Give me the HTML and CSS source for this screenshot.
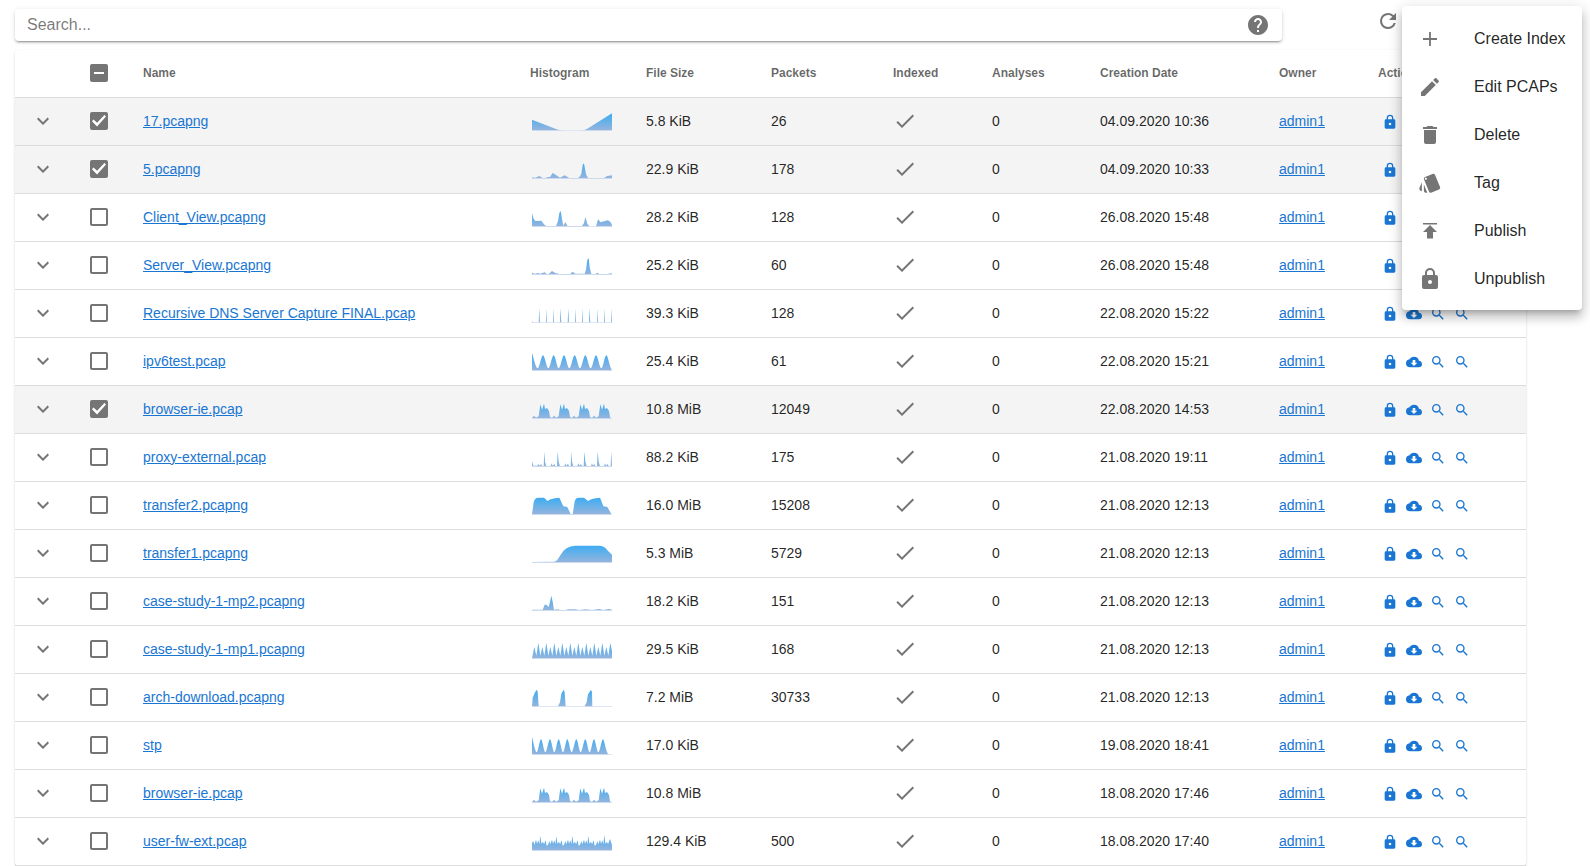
FILE: index.html
```
<!DOCTYPE html>
<html lang="en">
<head>
<meta charset="utf-8">
<meta name="viewport" content="width=device-width, initial-scale=1">
<title>PCAPs</title>
<link rel="stylesheet" href="styles.css">
</head>
<body>
<svg class="defs" aria-hidden="true">
  <defs>
    <linearGradient id="fill" gradientUnits="userSpaceOnUse" x1="0" y1="0" x2="0" y2="54"><stop offset="0" stop-color="#3aacf3"/><stop offset="1" stop-color="#98b5dc"/></linearGradient>
    <symbol id="chevron" viewBox="0 0 24 24"><path d="M7.41 8.58 12 13.17l4.59-4.59L18 10l-6 6-6-6z"/></symbol>
    <symbol id="check" viewBox="0 0 24 24"><path d="M9 16.17 4.83 12l-1.42 1.41L9 19 21 7l-1.41-1.41z"/></symbol>
    <symbol id="lock" viewBox="0 0 24 24"><path d="M12 17a2 2 0 0 0 2-2 2 2 0 0 0-2-2 2 2 0 0 0-2 2 2 2 0 0 0 2 2m6-9a2 2 0 0 1 2 2v10a2 2 0 0 1-2 2H6a2 2 0 0 1-2-2V10a2 2 0 0 1 2-2h1V6a5 5 0 0 1 10 0v2h1m-6-5a3 3 0 0 0-3 3v2h6V6a3 3 0 0 0-3-3z"/></symbol>
    <symbol id="cloud" viewBox="0 0 24 24"><path d="M17 13l-5 5-5-5h3V9h4v4m5.35-2.97A7.49 7.49 0 0 0 12 4C9.11 4 6.6 5.64 5.35 8.04A5.994 5.994 0 0 0 0 14a6 6 0 0 0 6 6h13a5 5 0 0 0 5-5c0-2.64-2.05-4.78-4.65-4.97z"/></symbol>
    <symbol id="search" viewBox="0 0 24 24"><path d="M9.5 3A6.5 6.5 0 0 1 16 9.500c0 1.610-.59 3.090-1.560 4.230l.27.270h.79l5 5-1.500 1.500-5-5v-.79l-.27-.27A6.516 6.516 0 0 1 9.500 16a6.500 6.500 0 0 1 0-13m0 2C7 5 5 7 5 9.500S7 14 9.500 14 14 12 14 9.500 12 5 9.500 5z"/></symbol>
    <symbol id="help" viewBox="0 0 24 24"><path d="M12 2C6.480 2 2 6.480 2 12s4.480 10 10 10 10-4.480 10-10S17.520 2 12 2zm1 17h-2v-2h2v2zm2.070-7.750-.9.920C13.450 12.900 13 13.500 13 15h-2v-.5c0-1.100.45-2.100 1.170-2.830l1.240-1.260c.37-.36.59-.86.59-1.410 0-1.100-.9-2-2-2s-2 .9-2 2H8c0-2.210 1.790-4 4-4s4 1.790 4 4c0 .88-.36 1.680-.93 2.250z"/></symbol>
    <symbol id="refresh" viewBox="0 0 24 24"><path d="M17.650 6.350A7.960 7.960 0 0 0 12 4a8 8 0 1 0 7.730 10h-2.080A6 6 0 1 1 12 6c1.660 0 3.140.69 4.220 1.780L13 11h7V4z"/></symbol>
    <symbol id="plus" viewBox="0 0 24 24"><path d="M19 12.900h-6.100V19h-1.800v-6.100H5v-1.800h6.100V5h1.800v6.100H19z"/></symbol>
    <symbol id="pencil" viewBox="0 0 24 24"><path d="M20.710 7.040c.39-.39.39-1.040 0-1.410l-2.340-2.340c-.37-.39-1.020-.39-1.410 0l-1.840 1.830 3.750 3.750M3 17.250V21h3.750L17.810 9.930l-3.750-3.750z"/></symbol>
    <symbol id="trash" viewBox="0 0 24 24"><path d="M19 4h-3.500l-1-1h-5l-1 1H5v2h14M6 19a2 2 0 0 0 2 2h8a2 2 0 0 0 2-2V7H6z"/></symbol>
    <symbol id="cards" viewBox="0 0 24 24"><path d="M2.530 19.650l1.340.56v-9.030l-2.430 5.860c-.41 1.020.08 2.190 1.090 2.610m19.500-3.700L17.070 3.980a2.013 2.013 0 0 0-1.810-1.230c-.26 0-.53.04-.79.15L7.100 5.950a1.999 1.999 0 0 0-1.080 2.600l4.960 11.970a1.998 1.998 0 0 0 2.600 1.080l7.360-3.050a1.994 1.994 0 0 0 1.090-2.600M7.880 8.750c-.55 0-1-.45-1-1s.45-1 1-1 1 .45 1 1-.45 1-1 1m-2 11a2 2 0 0 0 2 2h1.450l-3.450-8.340z"/></symbol>
    <symbol id="publish" viewBox="0 0 24 24"><path d="M5 4v1.500h14V4H5zm0 9h4v6.500h6V13h4l-7-7z"/></symbol>
    <g id="bursts"><path d="M0 51 6 44 12 50 20 46 25 10 30 26 36 8 39 24 45 21 51 30 54 48 60 51 66 44 72 50 80 46 85 10 90 26 96 8 99 24 105 21 111 30 114 48 120 51 126 44 132 50 140 46 145 10 150 26 156 8 159 24 165 21 171 30 174 48 180 51 186 44 192 50 200 46 205 10 210 26 216 8 219 24 225 21 231 30 234 48 237 52H0z"/></g>
  </defs>
</svg>

<main class="page">
  <header class="toolbar">
    <div class="search">
      <input class="search-input" type="text" placeholder="Search..." aria-label="Search">
      <button class="icon-button" type="button" aria-label="Help"><svg class="icon"><use href="#help"/></svg></button>
    </div>
    <button class="icon-button" type="button" aria-label="Refresh"><svg class="icon"><use href="#refresh"/></svg></button>
  </header>

  <table class="pcaps">
    <colgroup><col class="c-expand"><col class="c-select"><col><col class="c-chart"><col class="c-size"><col class="c-packets"><col class="c-indexed"><col class="c-analyses"><col class="c-date"><col class="c-owner"><col class="c-actions"></colgroup>
    <thead>
      <tr><th></th><th><input class="box mixed" type="checkbox" aria-label="Select all"></th><th>Name</th><th>Histogram</th><th>File Size</th><th>Packets</th><th>Indexed</th><th>Analyses</th><th>Creation Date</th><th>Owner</th><th>Actions</th></tr>
    </thead>
    <tbody>
      <tr class="selected">
        <td><button class="icon-button expand" type="button" aria-label="Expand"><svg class="icon"><use href="#chevron"/></svg></button></td>
        <td><input class="box" type="checkbox" checked aria-label="Select 17.pcapng"></td>
        <td><a href="#">17.pcapng</a></td>
        <td><svg class="chart" viewBox="0 0 240 54"><path class="base" d="M0 51h240v3H0z"/><path d="M0 52V20L74 49Q82 52 92 52H148Q158 52 166 47L240 1V52z"/></svg></td>
        <td>5.8 KiB</td><td>26</td><td><svg class="icon"><use href="#check"/></svg></td><td>0</td><td>04.09.2020 10:36</td><td><a href="#">admin1</a></td>
        <td><div class="actions"><button type="button" aria-label="Lock"><svg><use href="#lock"/></svg></button><button type="button" aria-label="Download"><svg><use href="#cloud"/></svg></button><button type="button" aria-label="Inspect"><svg><use href="#search"/></svg></button><button type="button" aria-label="Analyze"><svg><use href="#search"/></svg></button></div></td>
      </tr>
      <tr class="selected">
        <td><button class="icon-button expand" type="button" aria-label="Expand"><svg class="icon"><use href="#chevron"/></svg></button></td>
        <td><input class="box" type="checkbox" checked aria-label="Select 5.pcapng"></td>
        <td><a href="#">5.pcapng</a></td>
        <td><svg class="chart" viewBox="0 0 240 54"><path class="base" d="M0 51h240v3H0z"/><path d="M0 52V49L10 50 22 45 32 51H40L48 48H54L62 36 72 42 84 50 98 43 112 51H138L144 46 148 38 152 12 154 7 157 12 162 40 168 51H216L226 45 240 43V52z"/></svg></td>
        <td>22.9 KiB</td><td>178</td><td><svg class="icon"><use href="#check"/></svg></td><td>0</td><td>04.09.2020 10:33</td><td><a href="#">admin1</a></td>
        <td><div class="actions"><button type="button" aria-label="Lock"><svg><use href="#lock"/></svg></button><button type="button" aria-label="Download"><svg><use href="#cloud"/></svg></button><button type="button" aria-label="Inspect"><svg><use href="#search"/></svg></button><button type="button" aria-label="Analyze"><svg><use href="#search"/></svg></button></div></td>
      </tr>
      <tr>
        <td><button class="icon-button expand" type="button" aria-label="Expand"><svg class="icon"><use href="#chevron"/></svg></button></td>
        <td><input class="box" type="checkbox" aria-label="Select Client_View.pcapng"></td>
        <td><a href="#">Client_View.pcapng</a></td>
        <td><svg class="chart" viewBox="0 0 240 54"><path class="base" d="M0 51h240v3H0z"/><path d="M0 52V12L4 28 10 36 28 35 36 46 42 51H72L78 36 82 12 86 6 90 30 94 50 100 39 106 51H150L156 42 160 24 166 44 172 52H192L198 31 206 40 216 37 228 34 236 40 240 48V52z"/></svg></td>
        <td>28.2 KiB</td><td>128</td><td><svg class="icon"><use href="#check"/></svg></td><td>0</td><td>26.08.2020 15:48</td><td><a href="#">admin1</a></td>
        <td><div class="actions"><button type="button" aria-label="Lock"><svg><use href="#lock"/></svg></button><button type="button" aria-label="Download"><svg><use href="#cloud"/></svg></button><button type="button" aria-label="Inspect"><svg><use href="#search"/></svg></button><button type="button" aria-label="Analyze"><svg><use href="#search"/></svg></button></div></td>
      </tr>
      <tr>
        <td><button class="icon-button expand" type="button" aria-label="Expand"><svg class="icon"><use href="#chevron"/></svg></button></td>
        <td><input class="box" type="checkbox" aria-label="Select Server_View.pcapng"></td>
        <td><a href="#">Server_View.pcapng</a></td>
        <td><svg class="chart" viewBox="0 0 240 54"><path class="base" d="M0 51h240v3H0z"/><path d="M0 52V47L8 50 18 48 24 50 38 46 44 51H50L60 42 70 48 82 51H114L122 44 130 50H158L162 38 166 8 170 4 173 30 178 51H190L196 47 202 51H224L240 49V52z"/></svg></td>
        <td>25.2 KiB</td><td>60</td><td><svg class="icon"><use href="#check"/></svg></td><td>0</td><td>26.08.2020 15:48</td><td><a href="#">admin1</a></td>
        <td><div class="actions"><button type="button" aria-label="Lock"><svg><use href="#lock"/></svg></button><button type="button" aria-label="Download"><svg><use href="#cloud"/></svg></button><button type="button" aria-label="Inspect"><svg><use href="#search"/></svg></button><button type="button" aria-label="Analyze"><svg><use href="#search"/></svg></button></div></td>
      </tr>
      <tr>
        <td><button class="icon-button expand" type="button" aria-label="Expand"><svg class="icon"><use href="#chevron"/></svg></button></td>
        <td><input class="box" type="checkbox" aria-label="Select Recursive DNS Server Capture FINAL.pcap"></td>
        <td><a href="#">Recursive DNS Server Capture FINAL.pcap</a></td>
        <td><svg class="chart" viewBox="0 0 240 54"><path class="base" d="M0 51h240v3H0z"/><path d="M0 52V48L3 52H20L22 10 24 52H42L43 10 45 52H63L64 10 66 52H84L85 10 88 52H107L109 10 111 52H129L130 10 132 52H150L151 10 153 52H171L172 10 175 52H195L196 10 198 52H216L217 10 219 52H237L239 10 240 52z"/></svg></td>
        <td>39.3 KiB</td><td>128</td><td><svg class="icon"><use href="#check"/></svg></td><td>0</td><td>22.08.2020 15:22</td><td><a href="#">admin1</a></td>
        <td><div class="actions"><button type="button" aria-label="Lock"><svg><use href="#lock"/></svg></button><button type="button" aria-label="Download"><svg><use href="#cloud"/></svg></button><button type="button" aria-label="Inspect"><svg><use href="#search"/></svg></button><button type="button" aria-label="Analyze"><svg><use href="#search"/></svg></button></div></td>
      </tr>
      <tr>
        <td><button class="icon-button expand" type="button" aria-label="Expand"><svg class="icon"><use href="#chevron"/></svg></button></td>
        <td><input class="box" type="checkbox" aria-label="Select ipv6test.pcap"></td>
        <td><a href="#">ipv6test.pcap</a></td>
        <td><svg class="chart" viewBox="0 0 240 54"><path class="base" d="M0 51h240v3H0z"/><path d="M0 52V0C6 20 12 46 17 46S28 7 33 7 44 46 49 46 60 7 65 7 75 46 80 46 91 7 96 7 107 46 112 46 123 7 128 7 139 46 144 46 155 7 160 7 171 46 176 46 187 7 192 7 203 46 208 46 218 7 223 7 234 46 239 50V52z"/></svg></td>
        <td>25.4 KiB</td><td>61</td><td><svg class="icon"><use href="#check"/></svg></td><td>0</td><td>22.08.2020 15:21</td><td><a href="#">admin1</a></td>
        <td><div class="actions"><button type="button" aria-label="Lock"><svg><use href="#lock"/></svg></button><button type="button" aria-label="Download"><svg><use href="#cloud"/></svg></button><button type="button" aria-label="Inspect"><svg><use href="#search"/></svg></button><button type="button" aria-label="Analyze"><svg><use href="#search"/></svg></button></div></td>
      </tr>
      <tr class="selected">
        <td><button class="icon-button expand" type="button" aria-label="Expand"><svg class="icon"><use href="#chevron"/></svg></button></td>
        <td><input class="box" type="checkbox" checked aria-label="Select browser-ie.pcap"></td>
        <td><a href="#">browser-ie.pcap</a></td>
        <td><svg class="chart" viewBox="0 0 240 54"><path class="base" d="M0 51h240v3H0z"/><use href="#bursts"/></svg></td>
        <td>10.8 MiB</td><td>12049</td><td><svg class="icon"><use href="#check"/></svg></td><td>0</td><td>22.08.2020 14:53</td><td><a href="#">admin1</a></td>
        <td><div class="actions"><button type="button" aria-label="Lock"><svg><use href="#lock"/></svg></button><button type="button" aria-label="Download"><svg><use href="#cloud"/></svg></button><button type="button" aria-label="Inspect"><svg><use href="#search"/></svg></button><button type="button" aria-label="Analyze"><svg><use href="#search"/></svg></button></div></td>
      </tr>
      <tr>
        <td><button class="icon-button expand" type="button" aria-label="Expand"><svg class="icon"><use href="#chevron"/></svg></button></td>
        <td><input class="box" type="checkbox" aria-label="Select proxy-external.pcap"></td>
        <td><a href="#">proxy-external.pcap</a></td>
        <td><svg class="chart" viewBox="0 0 240 54"><path class="base" d="M0 51h240v3H0z"/><path d="M0 52V36L4 50H16L19 44 22 50 28 45 30 51H35L37 8 39 38 43 51H56L59 43 62 50 67 45 70 51H75L77 8 80 38 84 51H97L100 43 103 50 108 44 111 51H116L118 8 120 38 124 51H136L139 43 142 50 147 45 150 51H155L157 8 160 38 164 51H177L180 43 183 50 187 45 190 51H195L197 8 200 38 204 51H216L219 43 222 50 227 45 230 51H236L238 8 240 52z"/></svg></td>
        <td>88.2 KiB</td><td>175</td><td><svg class="icon"><use href="#check"/></svg></td><td>0</td><td>21.08.2020 19:11</td><td><a href="#">admin1</a></td>
        <td><div class="actions"><button type="button" aria-label="Lock"><svg><use href="#lock"/></svg></button><button type="button" aria-label="Download"><svg><use href="#cloud"/></svg></button><button type="button" aria-label="Inspect"><svg><use href="#search"/></svg></button><button type="button" aria-label="Analyze"><svg><use href="#search"/></svg></button></div></td>
      </tr>
      <tr>
        <td><button class="icon-button expand" type="button" aria-label="Expand"><svg class="icon"><use href="#chevron"/></svg></button></td>
        <td><input class="box" type="checkbox" aria-label="Select transfer2.pcapng"></td>
        <td><a href="#">transfer2.pcapng</a></td>
        <td><svg class="chart" viewBox="0 0 240 54"><path class="base" d="M0 51h240v3H0z"/><path d="M0 52 5 16Q8 2 18 2H36Q40 4 46 12L56 7Q68 2 82 2 86 10 94 28L106 30 116 51H122L128 14Q130 2 140 2H156L168 12 178 7Q190 2 204 2 208 10 214 28L226 30 238 51V52z"/></svg></td>
        <td>16.0 MiB</td><td>15208</td><td><svg class="icon"><use href="#check"/></svg></td><td>0</td><td>21.08.2020 12:13</td><td><a href="#">admin1</a></td>
        <td><div class="actions"><button type="button" aria-label="Lock"><svg><use href="#lock"/></svg></button><button type="button" aria-label="Download"><svg><use href="#cloud"/></svg></button><button type="button" aria-label="Inspect"><svg><use href="#search"/></svg></button><button type="button" aria-label="Analyze"><svg><use href="#search"/></svg></button></div></td>
      </tr>
      <tr>
        <td><button class="icon-button expand" type="button" aria-label="Expand"><svg class="icon"><use href="#chevron"/></svg></button></td>
        <td><input class="box" type="checkbox" aria-label="Select transfer1.pcapng"></td>
        <td><a href="#">transfer1.pcapng</a></td>
        <td><svg class="chart" viewBox="0 0 240 54"><path class="base" d="M0 51h240v3H0z"/><path d="M0 51 66 50Q76 48 84 32 100 2 130 2H200Q218 2 228 18L240 29V52H0z"/></svg></td>
        <td>5.3 MiB</td><td>5729</td><td><svg class="icon"><use href="#check"/></svg></td><td>0</td><td>21.08.2020 12:13</td><td><a href="#">admin1</a></td>
        <td><div class="actions"><button type="button" aria-label="Lock"><svg><use href="#lock"/></svg></button><button type="button" aria-label="Download"><svg><use href="#cloud"/></svg></button><button type="button" aria-label="Inspect"><svg><use href="#search"/></svg></button><button type="button" aria-label="Analyze"><svg><use href="#search"/></svg></button></div></td>
      </tr>
      <tr>
        <td><button class="icon-button expand" type="button" aria-label="Expand"><svg class="icon"><use href="#chevron"/></svg></button></td>
        <td><input class="box" type="checkbox" aria-label="Select case-study-1-mp2.pcapng"></td>
        <td><a href="#">case-study-1-mp2.pcapng</a></td>
        <td><svg class="chart" viewBox="0 0 240 54"><path class="base" d="M0 51h240v3H0z"/><path d="M0 50H32L38 35H43L50 42 54 26 58 8 62 26 66 50 78 49 84 51H100L110 49H130L140 51 162 49 180 51 202 48 214 51 230 48 240 50V52H0z"/></svg></td>
        <td>18.2 KiB</td><td>151</td><td><svg class="icon"><use href="#check"/></svg></td><td>0</td><td>21.08.2020 12:13</td><td><a href="#">admin1</a></td>
        <td><div class="actions"><button type="button" aria-label="Lock"><svg><use href="#lock"/></svg></button><button type="button" aria-label="Download"><svg><use href="#cloud"/></svg></button><button type="button" aria-label="Inspect"><svg><use href="#search"/></svg></button><button type="button" aria-label="Analyze"><svg><use href="#search"/></svg></button></div></td>
      </tr>
      <tr>
        <td><button class="icon-button expand" type="button" aria-label="Expand"><svg class="icon"><use href="#chevron"/></svg></button></td>
        <td><input class="box" type="checkbox" aria-label="Select case-study-1-mp1.pcapng"></td>
        <td><a href="#">case-study-1-mp1.pcapng</a></td>
        <td><svg class="chart" viewBox="0 0 240 54"><path class="base" d="M0 51h240v3H0z"/><path d="M0 52 7 18 13 44 19 6 25 44 31 18 37 44 43 6 49 44 55 18 61 44 67 6 73 44 79 18 85 44 91 6 97 44 103 18 109 44 115 6 121 44 127 18 133 44 139 6 145 44 151 18 157 44 163 6 169 44 175 18 181 44 187 6 193 44 199 18 205 44 211 6 217 44 223 18 229 44 235 6 240 30V52z"/></svg></td>
        <td>29.5 KiB</td><td>168</td><td><svg class="icon"><use href="#check"/></svg></td><td>0</td><td>21.08.2020 12:13</td><td><a href="#">admin1</a></td>
        <td><div class="actions"><button type="button" aria-label="Lock"><svg><use href="#lock"/></svg></button><button type="button" aria-label="Download"><svg><use href="#cloud"/></svg></button><button type="button" aria-label="Inspect"><svg><use href="#search"/></svg></button><button type="button" aria-label="Analyze"><svg><use href="#search"/></svg></button></div></td>
      </tr>
      <tr>
        <td><button class="icon-button expand" type="button" aria-label="Expand"><svg class="icon"><use href="#chevron"/></svg></button></td>
        <td><input class="box" type="checkbox" aria-label="Select arch-download.pcapng"></td>
        <td><a href="#">arch-download.pcapng</a></td>
        <td><svg class="chart" viewBox="0 0 240 54"><path class="base" d="M0 51h240v3H0z"/><path d="M0 52 2 26 8 12 14 2 17 8 20 52H78L84 40 88 14 95 2 98 10 101 52H158L164 40 168 16 177 2 180 10 181 52z"/></svg></td>
        <td>7.2 MiB</td><td>30733</td><td><svg class="icon"><use href="#check"/></svg></td><td>0</td><td>21.08.2020 12:13</td><td><a href="#">admin1</a></td>
        <td><div class="actions"><button type="button" aria-label="Lock"><svg><use href="#lock"/></svg></button><button type="button" aria-label="Download"><svg><use href="#cloud"/></svg></button><button type="button" aria-label="Inspect"><svg><use href="#search"/></svg></button><button type="button" aria-label="Analyze"><svg><use href="#search"/></svg></button></div></td>
      </tr>
      <tr>
        <td><button class="icon-button expand" type="button" aria-label="Expand"><svg class="icon"><use href="#chevron"/></svg></button></td>
        <td><input class="box" type="checkbox" aria-label="Select stp"></td>
        <td><a href="#">stp</a></td>
        <td><svg class="chart" viewBox="0 0 240 54"><path class="base" d="M0 51h240v3H0z"/><path d="M0 52V0C5 20 10 46 14 46S23 7 27 7 36 46 40 46 50 7 54 7 63 46 67 46 76 7 80 7 89 46 93 46 102 7 106 7 115 46 119 46 129 7 133 7 142 46 146 46 156 7 160 7 169 46 173 46 182 7 186 7 195 46 199 46 209 7 213 7 222 50 230 52z"/></svg></td>
        <td>17.0 KiB</td><td></td><td><svg class="icon"><use href="#check"/></svg></td><td>0</td><td>19.08.2020 18:41</td><td><a href="#">admin1</a></td>
        <td><div class="actions"><button type="button" aria-label="Lock"><svg><use href="#lock"/></svg></button><button type="button" aria-label="Download"><svg><use href="#cloud"/></svg></button><button type="button" aria-label="Inspect"><svg><use href="#search"/></svg></button><button type="button" aria-label="Analyze"><svg><use href="#search"/></svg></button></div></td>
      </tr>
      <tr>
        <td><button class="icon-button expand" type="button" aria-label="Expand"><svg class="icon"><use href="#chevron"/></svg></button></td>
        <td><input class="box" type="checkbox" aria-label="Select browser-ie.pcap"></td>
        <td><a href="#">browser-ie.pcap</a></td>
        <td><svg class="chart" viewBox="0 0 240 54"><path class="base" d="M0 51h240v3H0z"/><use href="#bursts"/></svg></td>
        <td>10.8 MiB</td><td></td><td><svg class="icon"><use href="#check"/></svg></td><td>0</td><td>18.08.2020 17:46</td><td><a href="#">admin1</a></td>
        <td><div class="actions"><button type="button" aria-label="Lock"><svg><use href="#lock"/></svg></button><button type="button" aria-label="Download"><svg><use href="#cloud"/></svg></button><button type="button" aria-label="Inspect"><svg><use href="#search"/></svg></button><button type="button" aria-label="Analyze"><svg><use href="#search"/></svg></button></div></td>
      </tr>
      <tr>
        <td><button class="icon-button expand" type="button" aria-label="Expand"><svg class="icon"><use href="#chevron"/></svg></button></td>
        <td><input class="box" type="checkbox" aria-label="Select user-fw-ext.pcap"></td>
        <td><a href="#">user-fw-ext.pcap</a></td>
        <td><svg class="chart" viewBox="0 0 240 54"><path class="base" d="M0 51h240v3H0z"/><path d="M0 52V30L4 24 7 36 12 20 15 32 19 22 22 34 25 8 28 32 33 26 36 34 41 22 44 38 48 36 52 24 55 34 60 20 63 32 67 22 70 34 73 10 76 32 81 26 84 34 89 22 92 38 96 36 100 24 103 34 108 20 111 32 115 22 118 34 121 8 124 32 129 26 132 34 137 22 140 38 144 36 148 24 151 34 156 20 159 32 163 22 166 34 169 8 172 32 177 26 180 34 185 22 188 38 192 36 196 24 199 34 204 20 207 32 211 22 214 34 217 6 220 32 225 26 228 34 234 18 240 36V52z"/></svg></td>
        <td>129.4 KiB</td><td>500</td><td><svg class="icon"><use href="#check"/></svg></td><td>0</td><td>18.08.2020 17:40</td><td><a href="#">admin1</a></td>
        <td><div class="actions"><button type="button" aria-label="Lock"><svg><use href="#lock"/></svg></button><button type="button" aria-label="Download"><svg><use href="#cloud"/></svg></button><button type="button" aria-label="Inspect"><svg><use href="#search"/></svg></button><button type="button" aria-label="Analyze"><svg><use href="#search"/></svg></button></div></td>
      </tr>
    </tbody>
  </table>
</main>

<div class="menu" role="menu">
  <button type="button" role="menuitem"><svg class="icon"><use href="#plus"/></svg>Create Index</button>
  <button type="button" role="menuitem"><svg class="icon"><use href="#pencil"/></svg>Edit PCAPs</button>
  <button type="button" role="menuitem"><svg class="icon"><use href="#trash"/></svg>Delete</button>
  <button type="button" role="menuitem"><svg class="icon"><use href="#cards"/></svg>Tag</button>
  <button type="button" role="menuitem"><svg class="icon"><use href="#publish"/></svg>Publish</button>
  <button type="button" role="menuitem"><svg class="icon"><use href="#lock"/></svg>Unpublish</button>
</div>
</body>
</html>
```
FILE: styles.css
```
* { box-sizing: border-box; }

body {
  margin: 0;
  background: #fff;
  color: rgba(0, 0, 0, .87);
  font: 14px/20px "Liberation Sans", Arial, sans-serif;
}

button {
  border: 0;
  padding: 0;
  background: none;
  color: inherit;
  font: inherit;
  cursor: pointer;
}

a { color: #1976d2; }

.defs { position: absolute; width: 0; height: 0; }

.page { padding: 9px 64px 0 15px; }

.toolbar {
  display: flex;
  align-items: flex-start;
  gap: 94px;
  margin-bottom: 9px;
}

.search {
  flex: 1;
  display: flex;
  align-items: center;
  height: 32px;
  padding: 0 12px;
  border-radius: 4px;
  box-shadow: 0 3px 1px -2px rgba(0, 0, 0, .2), 0 2px 2px 0 rgba(0, 0, 0, .14), 0 1px 5px 0 rgba(0, 0, 0, .12);
}

.search-input {
  flex: 1;
  min-width: 0;
  border: 0;
  padding: 0;
  outline: 0;
  background: none;
  color: inherit;
  font: 16px/24px "Liberation Sans", Arial, sans-serif;
}

.search-input::placeholder { color: rgba(0, 0, 0, .54); }

.icon { display: block; width: 24px; height: 24px; fill: #757575; }
.icon-button { display: block; flex: none; }
.toolbar > .icon-button { margin-right: 126px; }

.pcaps {
  width: 100%;
  table-layout: fixed;
  border-collapse: separate;
  border-spacing: 0;
  border-radius: 4px;
  box-shadow: 0 2px 1px -1px rgba(0, 0, 0, .2), 0 1px 1px 0 rgba(0, 0, 0, .14), 0 1px 3px 0 rgba(0, 0, 0, .12);
}

.c-expand { width: 56px; }
.c-select { width: 72px; }
.c-chart { width: 116px; }
.c-size { width: 125px; }
.c-packets { width: 122px; }
.c-indexed { width: 99px; }
.c-analyses { width: 108px; }
.c-date { width: 179px; }
.c-owner { width: 99px; }
.c-actions { width: 148px; }

th, td {
  height: 48px;
  padding: 0 0 2px;
  border-bottom: 1px solid #dcdcdc;
  text-align: left;
  vertical-align: middle;
  white-space: nowrap;
}

th { color: rgba(0, 0, 0, .6); font-size: 12px; font-weight: 700; }

.selected { background: #f4f4f4; }

.expand { margin-left: 16px; }

.box {
  appearance: none;
  display: grid;
  width: 18px;
  height: 18px;
  margin: 0 0 0 19px;
  border: 2px solid #757575;
  border-radius: 2px;
}

.box:checked, .box.mixed { background: #757575; }

.box:checked::before {
  content: "";
  width: 14px;
  height: 14px;
  background: #fff;
  clip-path: polygon(0 55%, 11% 43%, 36% 66%, 89% 10%, 100% 22%, 36% 92%);
}

.box.mixed::before {
  content: "";
  width: 10px;
  height: 2px;
  margin: auto;
  background: #fff;
}

.chart { display: block; width: 80px; height: 18px; margin: 3px 0 0 2px; fill: url(#fill); }
.base { fill: #dde7f3; }

.actions { display: flex; padding-top: 3px; }
.actions button { display: grid; place-items: center; width: 24px; height: 24px; }
.actions svg { width: 16px; height: 16px; fill: #1976d2; }

.menu {
  position: absolute;
  top: 6px;
  right: 8px;
  min-width: 180px;
  padding: 9px 0 7px;
  border-radius: 4px;
  background: #fff;
  box-shadow: 0 5px 5px -3px rgba(0, 0, 0, .2), 0 8px 10px 1px rgba(0, 0, 0, .14), 0 3px 14px 2px rgba(0, 0, 0, .12);
}

.menu button {
  display: flex;
  align-items: center;
  gap: 32px;
  width: 100%;
  height: 48px;
  padding: 0 16px;
  font-size: 16px;
}
```
